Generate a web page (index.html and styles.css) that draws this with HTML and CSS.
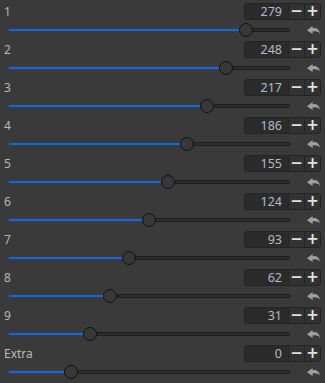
FILE: index.html
```html
<!DOCTYPE html>
<html lang="en">
<head>
    <meta charset="UTF-8">
    <title>Sliders</title>
    <link rel="stylesheet" href="styles.css">
</head>
<body>
    <div class="panel">
        <div class="row">
            <div class="row-top"><span class="label">1</span>
                <div class="spin"><span class="value">279</span><button class="btn">&minus;</button><button class="btn">+</button></div></div>
            <div class="row-bottom"><div class="track"><div class="fill" style="width: 237.5px"></div><div class="handle" style="left: 230.5px"></div></div>
                <svg class="reset" width="13" height="8" viewBox="0 0 13 8"><path d="M13 7.6 C12.4 3.6 9.6 1.6 5.6 2.2 L5.6 0 L0 4.2 L5.6 8 L5.6 5.4 C9 5 11.4 5.6 13 7.6 Z"/></svg></div>
        </div>
        <div class="row">
            <div class="row-top"><span class="label">2</span>
                <div class="spin"><span class="value">248</span><button class="btn">&minus;</button><button class="btn">+</button></div></div>
            <div class="row-bottom"><div class="track"><div class="fill" style="width: 218px"></div><div class="handle" style="left: 211px"></div></div>
                <svg class="reset" width="13" height="8" viewBox="0 0 13 8"><path d="M13 7.6 C12.4 3.6 9.6 1.6 5.6 2.2 L5.6 0 L0 4.2 L5.6 8 L5.6 5.4 C9 5 11.4 5.6 13 7.6 Z"/></svg></div>
        </div>
        <div class="row">
            <div class="row-top"><span class="label">3</span>
                <div class="spin"><span class="value">217</span><button class="btn">&minus;</button><button class="btn">+</button></div></div>
            <div class="row-bottom"><div class="track"><div class="fill" style="width: 198.7px"></div><div class="handle" style="left: 191.7px"></div></div>
                <svg class="reset" width="13" height="8" viewBox="0 0 13 8"><path d="M13 7.6 C12.4 3.6 9.6 1.6 5.6 2.2 L5.6 0 L0 4.2 L5.6 8 L5.6 5.4 C9 5 11.4 5.6 13 7.6 Z"/></svg></div>
        </div>
        <div class="row">
            <div class="row-top"><span class="label">4</span>
                <div class="spin"><span class="value">186</span><button class="btn">&minus;</button><button class="btn">+</button></div></div>
            <div class="row-bottom"><div class="track"><div class="fill" style="width: 179.3px"></div><div class="handle" style="left: 172.3px"></div></div>
                <svg class="reset" width="13" height="8" viewBox="0 0 13 8"><path d="M13 7.6 C12.4 3.6 9.6 1.6 5.6 2.2 L5.6 0 L0 4.2 L5.6 8 L5.6 5.4 C9 5 11.4 5.6 13 7.6 Z"/></svg></div>
        </div>
        <div class="row">
            <div class="row-top"><span class="label">5</span>
                <div class="spin"><span class="value">155</span><button class="btn">&minus;</button><button class="btn">+</button></div></div>
            <div class="row-bottom"><div class="track"><div class="fill" style="width: 159.9px"></div><div class="handle" style="left: 152.9px"></div></div>
                <svg class="reset" width="13" height="8" viewBox="0 0 13 8"><path d="M13 7.6 C12.4 3.6 9.6 1.6 5.6 2.2 L5.6 0 L0 4.2 L5.6 8 L5.6 5.4 C9 5 11.4 5.6 13 7.6 Z"/></svg></div>
        </div>
        <div class="row">
            <div class="row-top"><span class="label">6</span>
                <div class="spin"><span class="value">124</span><button class="btn">&minus;</button><button class="btn">+</button></div></div>
            <div class="row-bottom"><div class="track"><div class="fill" style="width: 140.5px"></div><div class="handle" style="left: 133.5px"></div></div>
                <svg class="reset" width="13" height="8" viewBox="0 0 13 8"><path d="M13 7.6 C12.4 3.6 9.6 1.6 5.6 2.2 L5.6 0 L0 4.2 L5.6 8 L5.6 5.4 C9 5 11.4 5.6 13 7.6 Z"/></svg></div>
        </div>
        <div class="row">
            <div class="row-top"><span class="label">7</span>
                <div class="spin"><span class="value">93</span><button class="btn">&minus;</button><button class="btn">+</button></div></div>
            <div class="row-bottom"><div class="track"><div class="fill" style="width: 121.2px"></div><div class="handle" style="left: 114.2px"></div></div>
                <svg class="reset" width="13" height="8" viewBox="0 0 13 8"><path d="M13 7.6 C12.4 3.6 9.6 1.6 5.6 2.2 L5.6 0 L0 4.2 L5.6 8 L5.6 5.4 C9 5 11.4 5.6 13 7.6 Z"/></svg></div>
        </div>
        <div class="row">
            <div class="row-top"><span class="label">8</span>
                <div class="spin"><span class="value">62</span><button class="btn">&minus;</button><button class="btn">+</button></div></div>
            <div class="row-bottom"><div class="track"><div class="fill" style="width: 101.8px"></div><div class="handle" style="left: 94.8px"></div></div>
                <svg class="reset" width="13" height="8" viewBox="0 0 13 8"><path d="M13 7.6 C12.4 3.6 9.6 1.6 5.6 2.2 L5.6 0 L0 4.2 L5.6 8 L5.6 5.4 C9 5 11.4 5.6 13 7.6 Z"/></svg></div>
        </div>
        <div class="row">
            <div class="row-top"><span class="label">9</span>
                <div class="spin"><span class="value">31</span><button class="btn">&minus;</button><button class="btn">+</button></div></div>
            <div class="row-bottom"><div class="track"><div class="fill" style="width: 82.4px"></div><div class="handle" style="left: 75.4px"></div></div>
                <svg class="reset" width="13" height="8" viewBox="0 0 13 8"><path d="M13 7.6 C12.4 3.6 9.6 1.6 5.6 2.2 L5.6 0 L0 4.2 L5.6 8 L5.6 5.4 C9 5 11.4 5.6 13 7.6 Z"/></svg></div>
        </div>
        <div class="row">
            <div class="row-top"><span class="label">Extra</span>
                <div class="spin"><span class="value">0</span><button class="btn">&minus;</button><button class="btn">+</button></div></div>
            <div class="row-bottom"><div class="track"><div class="fill" style="width: 63px"></div><div class="handle" style="left: 56px"></div></div>
                <svg class="reset" width="13" height="8" viewBox="0 0 13 8"><path d="M13 7.6 C12.4 3.6 9.6 1.6 5.6 2.2 L5.6 0 L0 4.2 L5.6 8 L5.6 5.4 C9 5 11.4 5.6 13 7.6 Z"/></svg></div>
        </div>
    </div>
</body>
</html>
```

FILE: styles.css
```css
:root {
    --bg: #3a3a3a;
    --label: #b4bab4;
    --value: #aebccb;
    --track: #2c2c2c;
    --fill: #2e63ae;
}

body {
    margin: 0;
    background-color: var(--bg);
    font-family: 'Noto Sans', 'Liberation Sans', sans-serif;
    font-size: 12px;
    overflow: hidden;
}

.panel {
    display: flex;
    flex-direction: column;
}

.row {
    height: 38px;
    padding-top: 3px;
    box-sizing: border-box;
}

.row-top {
    height: 17px;
    display: flex;
    justify-content: space-between;
    align-items: center;
    padding: 0 4px 0 4px;
}

.label {
    color: var(--label);
    line-height: 17px;
}

/* Spin box */
.spin {
    width: 77px;
    height: 17px;
    box-sizing: border-box;
    display: flex;
    background-color: #2b2b2b;
    border: 1px solid #242424;
    border-radius: 3px;
    overflow: hidden;
}

.spin .value {
    flex: 1;
    text-align: right;
    padding-right: 6px;
    color: var(--value);
    line-height: 15px;
    font-size: 12.5px;
}

.spin .btn {
    width: 16px;
    height: 15px;
    padding: 0;
    margin: 0;
    border: none;
    border-left: 1px solid #242424;
    background-color: #323232;
    color: #e0e0e0;
    font-family: 'DejaVu Sans', sans-serif;
    font-size: 15px;
    font-weight: bold;
    line-height: 15px;
}

/* Slider */
.row-bottom {
    height: 18px;
    display: flex;
    align-items: flex-start;
    padding-left: 8px;
}

.track {
    position: relative;
    width: 282px;
    height: 4px;
    margin-top: 8px;
    background-color: var(--track);
    border-radius: 2px;
    box-shadow: inset 0 0 0 1px #1e1e1e;
}

.fill {
    height: 4px;
    background-color: var(--fill);
    border-radius: 2px;
    box-shadow: inset 0 0 0 1px #1f4177;
}

.handle {
    position: absolute;
    top: -5px;
    width: 14px;
    height: 14px;
    box-sizing: border-box;
    border-radius: 50%;
    background-color: #383838;
    border: 1px solid #111;
}

.reset {
    margin: 6px 0 0 17px;
    fill: #a0a0a0;
}
```
